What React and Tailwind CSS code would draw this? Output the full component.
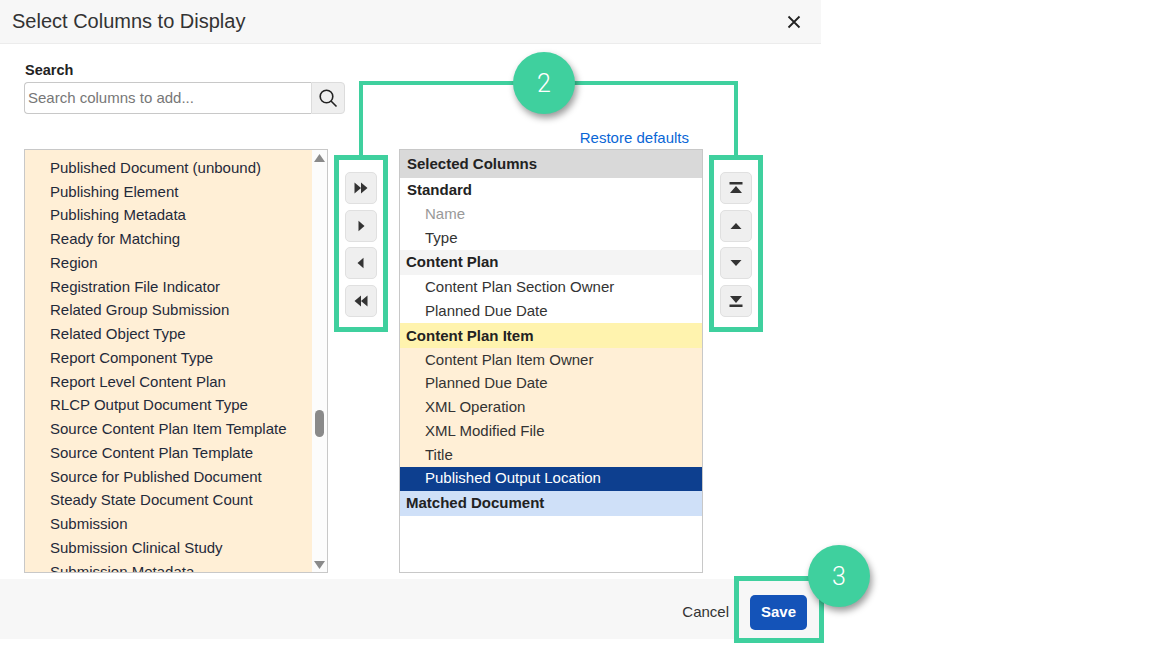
const left = ["Published Document (unbound)","Publishing Element","Publishing Metadata","Ready for Matching","Region","Registration File Indicator","Related Group Submission","Related Object Type","Report Component Type","Report Level Content Plan","RLCP Output Document Type","Source Content Plan Item Template","Source Content Plan Template","Source for Published Document","Steady State Document Count","Submission","Submission Clinical Study","Submission Metadata"];

const Tri = ({ d }) => (
  <svg width="16" height="16" viewBox="0 0 16 16" className="text-[#333]" fill="currentColor"><path d={d} /></svg>
);
const Btn = ({ d }) => (
  <button className="w-[32px] h-[32px] rounded-[5px] border border-[#e0e0e0] bg-[#efefef] flex items-center justify-center"><Tri d={d} /></button>
);
const Item = ({ children, cls = "" }) => (
  <div className={`h-[23.75px] pl-[25px] flex items-center whitespace-nowrap ${cls}`}>{children}</div>
);
const Group = ({ children, cls = "" }) => (
  <div className={`h-[25px] pl-[6px] flex items-center font-bold text-[#222] ${cls}`}>{children}</div>
);

export default function App() {
  return (
    <div className="relative w-[1150px] h-[666px] bg-white overflow-hidden text-[15px] text-[#333] font-['Liberation_Sans',Arial,sans-serif]">
      <div className="w-[821px]">
        <div className="h-[44px] bg-[#f7f7f7] border-b border-[#ececec] pl-[12px] pr-[20px] flex items-center justify-between">
          <h1 className="text-[20px] text-[#333] leading-none -mt-[1px]">Select Columns to Display</h1>
          <svg width="14" height="14" viewBox="0 0 14 14" stroke="#222" strokeWidth="1.8" className="mt-[1px]"><path d="M1.5 1.5l11 11M12.5 1.5l-11 11" /></svg>
        </div>
        <div className="h-[535px] px-[24px] pt-[17px]">
          <div className="font-bold text-[14.5px] leading-[18px] text-[#222] pl-[1px]">Search</div>
          <div className="mt-[3px] w-[321px] h-[32px] flex">
            <input readOnly placeholder="Search columns to add..." className="flex-1 min-w-0 h-full px-[3px] pb-[2px] border border-[#c8c8c8] border-r-0 rounded-l-[4px] placeholder:text-[#777] outline-none" />
            <div className="w-[34px] border border-[#dcdcdc] bg-[#efefef] rounded-r-[4px] flex items-center justify-center">
              <svg width="20" height="20" viewBox="0 0 20 20" fill="none" stroke="#222" strokeWidth="1.6"><circle cx="8.5" cy="8.5" r="6.3" /><path d="M13 13l5.5 5.5" /></svg>
            </div>
          </div>
          <div className="mt-[35px] flex items-start">
            <div className="w-[304px] h-[424px] border border-[#c8c8c8] flex overflow-hidden">
              <div className="flex-1 bg-[#ffefd6] pt-[6.3px] text-[#1f2a3a]">
                {left.map((t) => <Item key={t}>{t}</Item>)}
              </div>
              <div className="relative w-[15px] bg-[#fcfcfc]">
                <svg width="11" height="9" viewBox="0 0 11 9" fill="#8a8a8a" className="absolute left-[2px] top-[4px]"><path d="M5.5 0L11 8H0z" /></svg>
                <div className="absolute left-[3px] top-[260px] w-[9px] h-[27px] rounded-full bg-[#8a8a8a]" />
                <svg width="11" height="9" viewBox="0 0 11 9" fill="#8a8a8a" className="absolute left-[2px] bottom-[3px]"><path d="M0 1h11L5.5 9z" /></svg>
              </div>
            </div>
            <div className="w-[71px] pt-[23px] pl-[17px] flex flex-col gap-[5.5px]">
              <Btn d="M1.5 2.5L8 8l-6.5 5.5zM8 2.5L14.5 8 8 13.5z" />
              <Btn d="M5.5 2.7l6 5.3-6 5.3z" />
              <Btn d="M10.5 2.7L4.5 8l6 5.3z" />
              <Btn d="M8 2.5L1.5 8 8 13.5zM14.5 2.5L8 8l6.5 5.5z" />
            </div>
            <div className="relative w-[304px] h-[424px] border border-[#c8c8c8]">
              <div className="absolute right-[13px] -top-[21px] text-[#0a66d6] leading-[18px] whitespace-nowrap">Restore defaults</div>
              <div className="h-[28px] bg-[#d9d9d9] pl-[7px] flex items-center font-bold text-[#222]">Selected Columns</div>
              <div className="h-[24px] pl-[7px] pt-[1px] flex items-center font-bold text-[#222]">Standard</div>
              <div className="h-[24px] pl-[25px] flex items-center text-[#999]">Name</div>
              <div className="h-[24px] pl-[25px] flex items-center">Type</div>
              <Group cls="bg-[#f4f4f4]">Content Plan</Group>
              <div className="h-[24px] pl-[25px] flex items-center">Content Plan Section Owner</div>
              <div className="h-[24px] pl-[25px] flex items-center">Planned Due Date</div>
              <Group cls="bg-[#fff3ae] pt-[1px]">Content Plan Item</Group>
              <div className="bg-[#ffefd6] h-[119px] pb-[1px]">
                <Item>Content Plan Item Owner</Item>
                <Item>Planned Due Date</Item>
                <Item>XML Operation</Item>
                <Item>XML Modified File</Item>
                <Item>Title</Item>
              </div>
              <div className="h-[24px] pb-[1px] pl-[25px] flex items-center bg-[#0d3f8f] text-white">Published Output Location</div>
              <Group cls="bg-[#cfe0f8] h-[24px]">Matched Document</Group>
            </div>
            <div className="pt-[23px] pl-[17px] flex flex-col gap-[5.5px]">
              <Btn d="M1.5 2h13v2.5h-13zM8 6l6 7H2z" />
              <Btn d="M8 5l5.5 6h-11z" />
              <Btn d="M2.5 5h11L8 11z" />
              <Btn d="M2 3h12l-6 7zM1.5 11.5h13V14h-13z" />
            </div>
          </div>
        </div>
        <div className="h-[60px] bg-[#f7f7f7] flex items-center justify-end pr-[14px] gap-[21px]">
          <span className="text-[#333] mt-[6px]">Cancel</span>
          <button className="w-[57px] h-[35px] mt-[6px] rounded-[5px] bg-[#1453b8] text-white font-bold text-[15px]">Save</button>
        </div>
      </div>

      {/* Annotation overlay */}
      <div className="absolute left-[334px] top-[155px] w-[54px] h-[177px] border-[5px] border-[#3fd09e]" />
      <div className="absolute left-[709px] top-[155px] w-[54px] h-[177px] border-[5px] border-[#3fd09e]" />
      <div className="absolute left-[359px] top-[81px] w-[379px] h-[74px] border-[4px] border-b-0 border-[#3fd09e]" />
      <div className="absolute left-[734px] top-[576px] w-[90px] h-[67px] border-[5px] border-[#3fd09e]" />
      <div className="absolute left-[513px] top-[52px] w-[62px] h-[62px] pt-[2px] rounded-full bg-[#3fd09e] shadow-[2px_4px_7px_rgba(0,0,0,0.4)] flex items-center justify-center text-white text-[25px] font-['Roboto',sans-serif] font-light">2</div>
      <div className="absolute left-[808px] top-[545px] w-[62px] h-[62px] pt-[2px] rounded-full bg-[#3fd09e] shadow-[2px_4px_7px_rgba(0,0,0,0.4)] flex items-center justify-center text-white text-[25px] font-['Roboto',sans-serif] font-light">3</div>
    </div>
  );
}
